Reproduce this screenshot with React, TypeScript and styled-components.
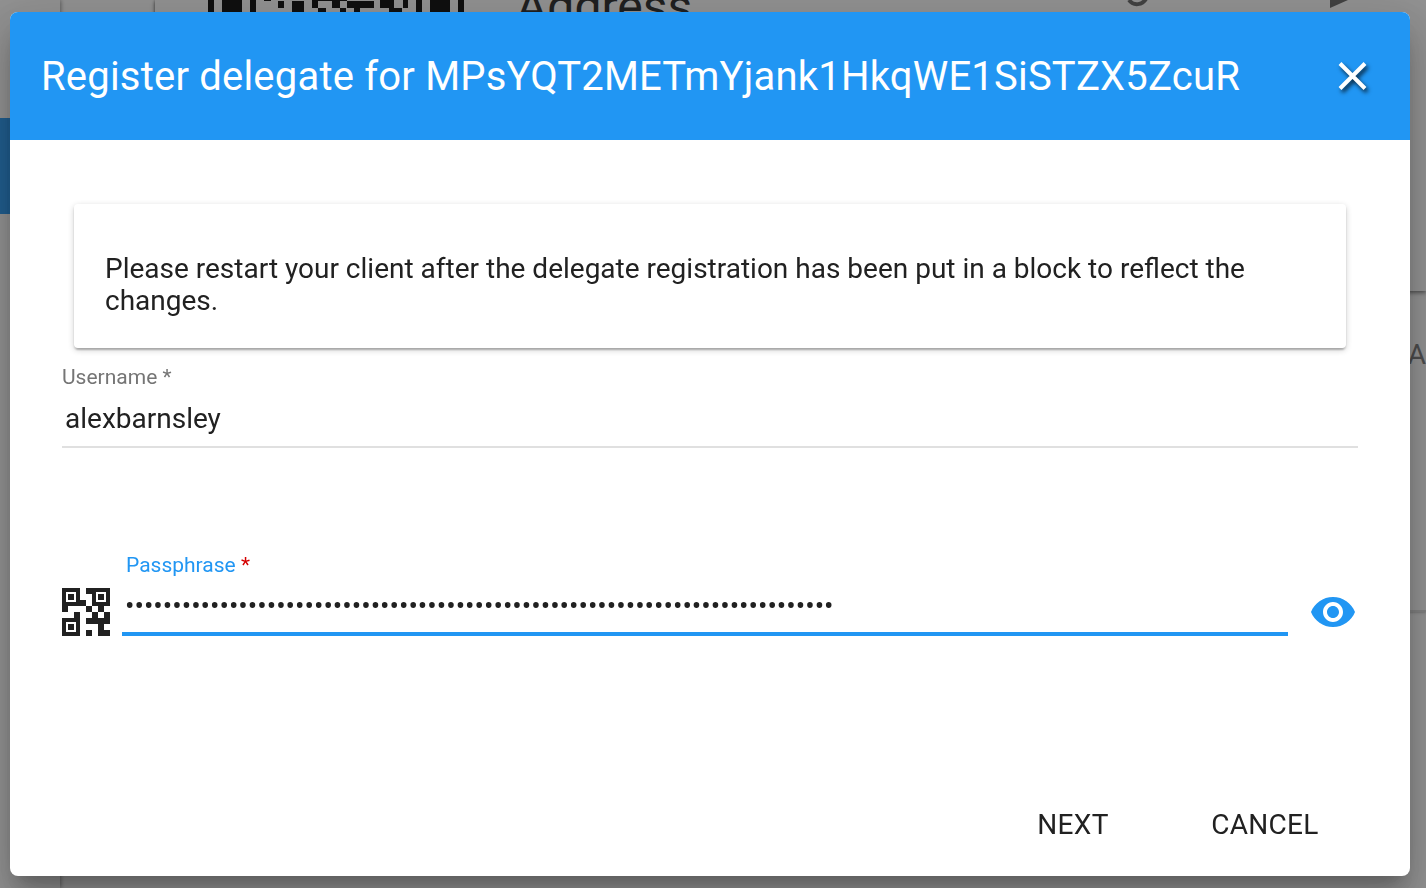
import React, { useState } from "react";
import styled, { createGlobalStyle } from "styled-components";

const GlobalStyle = createGlobalStyle`
  * { box-sizing: border-box; }
  body {
    margin: 0;
    background: #fafafa;
    color: #212121;
    font-family: Roboto, "Liberation Sans", sans-serif;
    font-size: 28px;
    line-height: 32px;
  }
  button, input { font: inherit; color: inherit; letter-spacing: inherit; }
  h1, h2, p { margin: 0; font-weight: 400; }
`;

/* ---------- account page behind the dialog ---------- */

const Page = styled.div`
  position: fixed;
  inset: 0;
  display: flex;
  overflow: hidden;
  background: #fafafa;
`;

const Sidebar = styled.div`
  flex: 0 0 60px;
  padding-top: 118px;
  box-shadow: 1px 0 4px rgba(0, 0, 0, 0.4);
`;

const SidebarActive = styled.div`
  height: 96px;
  background: #2196f3;
`;

const Content = styled.div`
  flex: 1;
  align-self: flex-start;
  margin-left: 95px;
  box-shadow: 0 0 3px rgba(0, 0, 0, 0.4);
`;

const AccountHeader = styled.div`
  display: flex;
  height: 291px;
  padding: 0 76px 0 53px;
  box-shadow: 0 2px 4px rgba(0, 0, 0, 0.5);
`;

const AccountTitle = styled.div`
  flex: 1;
  margin-left: 52px;
  font-size: 48px;
  line-height: 14px;
`;

const AccountActions = styled.div`
  display: flex;
  gap: 180px;
  color: #757575;
  svg { display: block; }
`;

const TableHead = styled.div`
  height: 321px;
  padding-top: 48px;
  border-bottom: 2px solid #d8d8d8;
  color: #757575;
  text-align: right;
`;

/* ---------- dialog ---------- */

const Backdrop = styled.div`
  position: relative;
  display: flex;
  min-height: 100vh;
  padding: 12px 16px 12px 10px;
  background: rgba(33, 33, 33, 0.48);
`;

const Dialog = styled.form`
  display: flex;
  flex: 1;
  flex-direction: column;
  min-width: 0;
  overflow: hidden;
  border-radius: 8px;
  background: #fff;
  box-shadow:
    0 14px 16px -8px rgba(0, 0, 0, 0.2),
    0 26px 38px 4px rgba(0, 0, 0, 0.14),
    0 10px 48px 8px rgba(0, 0, 0, 0.12);
`;

const Toolbar = styled.header`
  display: flex;
  flex: 0 0 128px;
  align-items: center;
  justify-content: space-between;
  padding: 0 33px 0 31px;
  background: #2196f3;
  color: #fff;
`;

const Title = styled.h1`
  padding-top: 2px;
  font-size: 40px;
  line-height: 48px;
  letter-spacing: 0.005em;
`;

const IconButton = styled.button<{ $width: number }>`
  display: flex;
  flex: 0 0 ${(p) => p.$width}px;
  align-items: center;
  justify-content: flex-end;
  height: 48px;
  padding: 0 1px 0 0;
  border: 0;
  background: none;
  cursor: pointer;
  svg { display: block; }
`;

const Body = styled.div`
  flex: 1;
  padding: 64px 52px 0;
`;

const Notice = styled.p`
  margin: 0 12px 16px;
  padding: 49px 31px 31px;
  border-radius: 4px;
  box-shadow:
    0 2px 6px rgba(0, 0, 0, 0.2),
    0 2px 2px rgba(0, 0, 0, 0.14),
    0 4px 2px -2px rgba(0, 0, 0, 0.12);
`;

const Field = styled.div`
  display: flex;
  flex: 1;
  flex-direction: column;
  min-width: 0;
`;

const Label = styled.label<{ $focused?: boolean }>`
  padding-left: ${(p) => (p.$focused ? 4 : 0)}px;
  color: ${(p) => (p.$focused ? "#2196f3" : "#757575")};
  font-size: 21px;
  line-height: 26px;
`;

const Required = styled.span`
  color: #d50000;
`;

const Input = styled.input<{ $focused?: boolean }>`
  width: 100%;
  height: 58px;
  padding: 0 3px;
  border: 0;
  border-bottom: ${(p) => (p.$focused ? "4px solid #2196f3" : "2px solid #e0e0e0")};
  border-radius: 0;
  outline: 0;
  background: none;
`;

const PassphraseRow = styled.div`
  display: flex;
  align-items: flex-end;
  margin-top: 104px;
`;

const QrButton = styled(IconButton)`
  margin-right: 12px;
  padding: 0;
`;

const Actions = styled.footer`
  display: flex;
  flex: 0 0 104px;
  align-items: center;
  justify-content: flex-end;
  gap: 16px;
  padding: 2px 57px 0;
`;

const ActionButton = styled.button`
  min-width: 176px;
  height: 72px;
  padding: 0 12px;
  border: 0;
  border-radius: 4px;
  background: none;
  letter-spacing: 0.01em;
  text-transform: uppercase;
  cursor: pointer;
`;

const AddressQr = () => (
  <svg width="256" height="256" viewBox="0 0 256 256" fill="#000" aria-hidden="true">
    <path d="M0 0h6v41H0zM14 0h20v34H14zM42 0h6v41h-6zM208 0h6v41h-6zM222 0h20v34h-20zM250 0h6v41h-6z" />
    <path d="M70 1h6v7h-6zM84 1h12v20H84zM104 0h6v8h-6zM124 0h8v8h-8zM139 1h27v7h-27zM172 0h14v8h-14zM195 0h5v8h-5z" />
    <path d="M110 8h8v7h-8zM132 8h6v7h-6zM146 8h6v7h-6zM181 8h13v7h-13zM56 0h7v1h-7zM104 0h35v1h-35z" />
  </svg>
);

const CloseIcon = () => (
  <svg width="48" height="48" viewBox="0 0 48 48" fill="none" aria-hidden="true">
    <path
      d="M12 11.500 37 36.500M37 11.500 12 36.500"
      stroke="#fff"
      strokeWidth="4"
      style={{ filter: "drop-shadow(2px 3px 2px rgba(0,0,0,.75))" }}
    />
  </svg>
);

const QrIcon = () => (
  <svg width="48" height="48" viewBox="0 0 48 48" fill="#212121" aria-hidden="true">
    <path
      fillRule="evenodd"
      d="M0 0h18v18H0zM4 4v10h10V4zM30 0h18v18H30zM34 4v10h10V4zM0 30h18v18H0zM4 34v10h10V34z"
    />
    <path d="M6 6h6v6H6zM36 6h6v6h-6zM6 36h6v6H6z" />
    <path d="M24 0h6v6h-6zM18 12h6v6h-6zM0 18h6v6H0zM24 18h6v6h-6zM36 18h6v6h-6zM12 24h6v6h-6zM30 24h6v6h-6zM42 24h6v6h-6z" />
    <path d="M24 30h24v6h-6v6h6v6H36V36H24zM24 42h6v6h-6z" />
  </svg>
);

const EyeIcon = () => (
  <svg width="48" height="48" viewBox="0 0 24 24" fill="#2196f3" aria-hidden="true">
    <path d="M12 4.500C7 4.500 2.730 7.610 1 12c1.730 4.390 6 7.500 11 7.500s9.270-3.110 11-7.500c-1.730-4.390-6-7.500-11-7.500zM12 17c-2.760 0-5-2.240-5-5s2.240-5 5-5 5 2.240 5 5-2.240 5-5 5zm0-8c-1.660 0-3 1.340-3 3s1.340 3 3 3 3-1.340 3-3-1.340-3-3-3z" />
  </svg>
);

export default function App() {
  const [username, setUsername] = useState("alexbarnsley");
  const [passphrase, setPassphrase] = useState("x".repeat(75));
  const [visible, setVisible] = useState(false);

  return (
    <>
      <GlobalStyle />
      <Page aria-hidden="true">
        <Sidebar>
          <SidebarActive />
        </Sidebar>
        <Content>
          <AccountHeader>
            <AddressQr />
            <AccountTitle>Address</AccountTitle>
            <AccountActions>
              <svg width="24" height="12" viewBox="0 0 24 12" fill="none">
                <path d="M3 0c4 6 14 6 18-3" stroke="#616161" strokeWidth="4" />
              </svg>
              <svg width="20" height="12" viewBox="0 0 20 12" fill="#616161">
                <path d="M0 0h18L0 8z" />
              </svg>
            </AccountActions>
          </AccountHeader>
          <TableHead>A</TableHead>
        </Content>
      </Page>
      <Backdrop>
        <Dialog role="dialog" aria-labelledby="dialog-title" onSubmit={(e) => e.preventDefault()}>
          <Toolbar>
            <Title id="dialog-title">Register delegate for MPsYQT2METmYjank1HkqWE1SiSTZX5ZcuR</Title>
            <IconButton type="button" $width={48} aria-label="Close">
              <CloseIcon />
            </IconButton>
          </Toolbar>
          <Body>
            <Notice>
              Please restart your client after the delegate registration has been put in a block to
              reflect the changes.
            </Notice>
            <Field>
              <Label htmlFor="username">Username *</Label>
              <Input id="username" value={username} onChange={(e) => setUsername(e.target.value)} />
            </Field>
            <PassphraseRow>
              <QrButton type="button" $width={48} aria-label="Scan QR code">
                <QrIcon />
              </QrButton>
              <Field>
                <Label htmlFor="passphrase" $focused>
                  Passphrase <Required>*</Required>
                </Label>
                <Input
                  id="passphrase"
                  type={visible ? "text" : "password"}
                  value={passphrase}
                  onChange={(e) => setPassphrase(e.target.value)}
                  $focused
                />
              </Field>
              <IconButton
                type="button"
                $width={70}
                aria-label="Show passphrase"
                onClick={() => setVisible(!visible)}
              >
                <EyeIcon />
              </IconButton>
            </PassphraseRow>
          </Body>
          <Actions>
            <ActionButton type="submit">Next</ActionButton>
            <ActionButton type="button">Cancel</ActionButton>
          </Actions>
        </Dialog>
      </Backdrop>
    </>
  );
}
